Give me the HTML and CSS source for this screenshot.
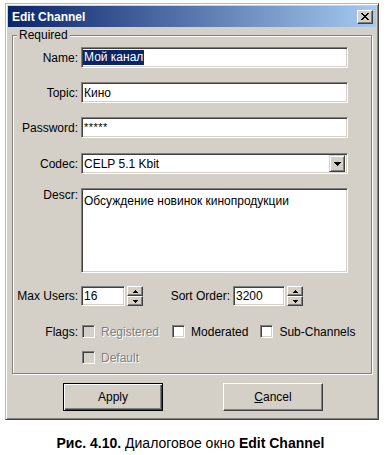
FILE: index.html
```html
<!DOCTYPE html>
<html lang="ru">
<head>
<meta charset="utf-8">
<title>Edit Channel</title>
<link rel="stylesheet" href="styles.css">
</head>
<body>
<div class="window">
  <div class="titlebar">
    <span class="title">Edit Channel</span>
    <span class="close">
      <svg width="8" height="7" viewBox="0 0 8 7" shape-rendering="crispEdges">
        <rect x="0" y="0" width="2" height="1"/><rect x="6" y="0" width="2" height="1"/>
        <rect x="1" y="1" width="2" height="1"/><rect x="5" y="1" width="2" height="1"/>
        <rect x="2" y="2" width="4" height="1"/>
        <rect x="3" y="3" width="2" height="1"/>
        <rect x="2" y="4" width="4" height="1"/>
        <rect x="1" y="5" width="2" height="1"/><rect x="5" y="5" width="2" height="1"/>
        <rect x="0" y="6" width="2" height="1"/><rect x="6" y="6" width="2" height="1"/>
      </svg>
    </span>
  </div>
  <div class="client">
    <fieldset class="group">
      <legend>Required</legend>
      <div class="row">
        <span class="label">Name:</span>
        <div class="field"><span class="sel">Мой канал</span></div>
      </div>
      <div class="row gap14">
        <span class="label">Topic:</span>
        <div class="field">Кино</div>
      </div>
      <div class="row gap14">
        <span class="label">Password:</span>
        <div class="field pass">*****</div>
      </div>
      <div class="row gap15">
        <span class="label">Codec:</span>
        <div class="field combo">
          <span class="combo-text">CELP 5.1 Kbit</span>
          <span class="drop">
            <svg width="7" height="4" viewBox="0 0 7 4" shape-rendering="crispEdges">
              <rect x="0" y="0" width="7" height="1"/><rect x="1" y="1" width="5" height="1"/>
              <rect x="2" y="2" width="3" height="1"/><rect x="3" y="3" width="1" height="1"/>
            </svg>
          </span>
        </div>
      </div>
      <div class="row gap14 top">
        <span class="label">Descr:</span>
        <div class="field area">Обсуждение новинок кинопродукции</div>
      </div>
      <div class="row gap13">
        <span class="label">Max Users:</span>
        <div class="field num users">16</div>
        <div class="spin">
          <span class="spin-btn"><svg width="5" height="3" viewBox="0 0 5 3" shape-rendering="crispEdges"><rect x="2" y="0" width="1" height="1"/><rect x="1" y="1" width="3" height="1"/><rect x="0" y="2" width="5" height="1"/></svg></span>
          <span class="spin-btn"><svg width="5" height="3" viewBox="0 0 5 3" shape-rendering="crispEdges"><rect x="0" y="0" width="5" height="1"/><rect x="1" y="1" width="3" height="1"/><rect x="2" y="2" width="1" height="1"/></svg></span>
        </div>
        <span class="label sort-label">Sort Order:</span>
        <div class="field num order">3200</div>
        <div class="spin">
          <span class="spin-btn"><svg width="5" height="3" viewBox="0 0 5 3" shape-rendering="crispEdges"><rect x="2" y="0" width="1" height="1"/><rect x="1" y="1" width="3" height="1"/><rect x="0" y="2" width="5" height="1"/></svg></span>
          <span class="spin-btn"><svg width="5" height="3" viewBox="0 0 5 3" shape-rendering="crispEdges"><rect x="0" y="0" width="5" height="1"/><rect x="1" y="1" width="3" height="1"/><rect x="2" y="2" width="1" height="1"/></svg></span>
        </div>
      </div>
      <div class="row flags">
        <span class="label">Flags:</span>
        <div class="opts">
          <span class="opt w-reg"><span class="cb dis"></span><span class="disabled">Registered</span></span>
          <span class="opt w-mod"><span class="cb"></span><span>Moderated</span></span>
          <span class="opt"><span class="cb"></span><span>Sub-Channels</span></span>
        </div>
      </div>
      <div class="row flags2">
        <span class="label"></span>
        <div class="opts">
          <span class="opt"><span class="cb dis"></span><span class="disabled">Default</span></span>
        </div>
      </div>
    </fieldset>
    <div class="buttons">
      <button class="btn default" type="button">Apply</button>
      <button class="btn" type="button"><u>C</u>ancel</button>
    </div>
  </div>
</div>
<p class="caption"><b>Рис. 4.10.</b> Диалоговое окно <b>Edit Channel</b></p>
</body>
</html>
```
FILE: styles.css
```css
* { box-sizing: border-box; }
html, body { margin: 0; padding: 0; background: #fff; }
body {
  font-family: "Liberation Sans", Arial, sans-serif;
  font-size: 12px;
  color: #000;
}

.window {
  margin: 3px 0 0 5px;
  width: 374px;
  height: 417px;
  background: #d4d0c8;
  border: 1px solid;
  border-color: #b8b8b8 #404040 #404040 #b8b8b8;
  box-shadow: inset 1px 1px #fff, inset -1px -1px #808080;
  padding: 2px 2px 0;
}

.titlebar {
  height: 21px;
  display: flex;
  align-items: center;
  justify-content: space-between;
  padding: 0 3px 0 4px;
  background: linear-gradient(to right, #0a246a, #a6caf0);
  color: #fff;
  font-weight: bold;
  font-size: 12px;
}

.close {
  width: 16px;
  height: 14px;
  display: flex;
  align-items: center;
  justify-content: center;
  background: #d4d0c8;
  border: 1px solid;
  border-color: #fff #404040 #404040 #fff;
  box-shadow: inset -1px -1px #808080;
}
.close svg { fill: #000; display: block; }

.client { padding: 0 4px; }

.group {
  margin: 1px 0 0;
  min-width: 0;
  border: 1px solid #808080;
  box-shadow: inset 1px 1px #fff, 1px 1px #fff;
  padding: 5px 23px 9px 2px;
}
.group legend {
  padding: 0 2px;
  margin-left: 2px;
  line-height: 14px;
  background: #d4d0c8;
}

.row { display: flex; align-items: center; }
.row.top { align-items: flex-start; }
.gap13 { margin-top: 13px; }
.gap14 { margin-top: 14px; }
.gap15 { margin-top: 15px; }
.flags { margin-top: 19px; height: 13px; }
.flags2 { margin-top: 13px; height: 13px; }

.label {
  flex: none;
  width: 63px;
  margin-right: 3px;
  text-align: right;
  line-height: 14px;
  white-space: nowrap;
}

.field {
  flex: none;
  width: 267px;
  height: 21px;
  background: #fff;
  border: 1px solid;
  border-color: #808080 #fff #fff #808080;
  box-shadow: inset 1px 1px #404040, inset -1px -1px #d4d0c8;
  padding: 0 0 0 2px;
  display: flex;
  align-items: center;
  white-space: nowrap;
}

.sel {
  margin-left: -1px;
  padding: 0 1px;
  line-height: 15px;
  background: #0a246a;
  color: #fff;
}

.pass { align-items: flex-start; padding-top: 3px; font-size: 11px; letter-spacing: 0.5px; }

.combo { justify-content: space-between; padding-right: 2px; }
.drop {
  width: 16px;
  height: 17px;
  display: flex;
  align-items: center;
  justify-content: center;
  background: #d4d0c8;
  border: 1px solid;
  border-color: #d4d0c8 #404040 #404040 #d4d0c8;
  box-shadow: inset 1px 1px #fff, inset -1px -1px #808080;
}
.drop svg { fill: #000; display: block; }

.area {
  height: 85px;
  align-items: flex-start;
  padding-top: 5px;
  line-height: 14px;
}

.num { height: 20px; }
.users { width: 44px; }
.order { width: 52px; }

.spin {
  flex: none;
  margin-left: 2px;
  width: 16px;
  height: 20px;
  display: flex;
  flex-direction: column;
}
.spin-btn {
  flex: 1;
  display: flex;
  align-items: center;
  justify-content: center;
  background: #d4d0c8;
  border: 1px solid;
  border-color: #fff #404040 #404040 #fff;
  box-shadow: inset -1px -1px #808080;
}
.spin-btn svg { fill: #000; display: block; }

.sort-label { width: 87px; }

.opts {
  flex: none;
  display: flex;
  align-items: center;
  margin-left: 1px;
  white-space: nowrap;
}
.opt { flex: none; display: flex; align-items: center; gap: 6px; line-height: 14px; }
.w-reg { margin-right: 13px; }
.w-mod { margin-right: 12px; }

.cb {
  width: 13px;
  height: 13px;
  flex: none;
  background: #fff;
  border: 1px solid;
  border-color: #808080 #fff #fff #808080;
  box-shadow: inset 1px 1px #404040, inset -1px -1px #d4d0c8;
}
.cb.dis { background: #d4d0c8; }
.disabled { color: #808080; text-shadow: 1px 1px #fff; }

.buttons {
  display: flex;
  gap: 60px;
  margin-top: 9px;
  padding-left: 51px;
}
.btn {
  width: 100px;
  height: 28px;
  padding: 0;
  font-family: "Liberation Sans", Arial, sans-serif;
  font-size: 12px;
  color: #000;
  background: #d4d0c8;
  border: 1px solid;
  border-color: #fff #404040 #404040 #fff;
  box-shadow: inset -1px -1px #808080;
}
.btn.default {
  border: 1px solid #000;
  box-shadow: inset 1px 1px #fff, inset -1px -1px #404040, inset -2px -2px #808080;
}

.caption {
  margin: 15px 0 0;
  text-align: center;
  font-size: 14px;
  line-height: 16px;
  padding-right: 5px;
}
```
